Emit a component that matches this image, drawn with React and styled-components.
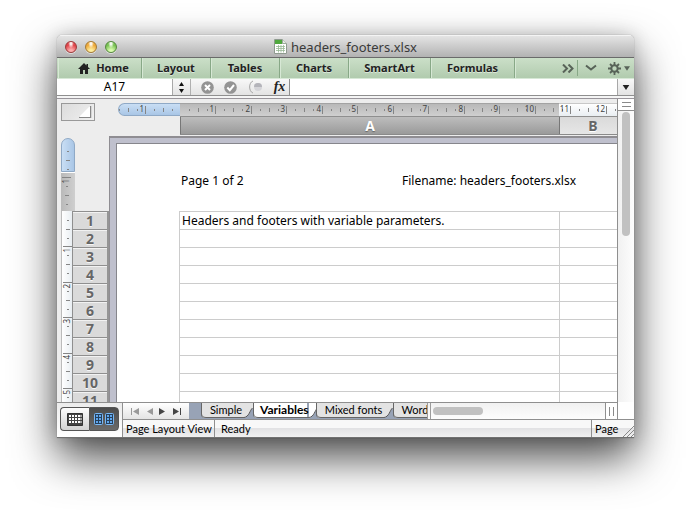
import React, { useState } from "react";
import styled, { createGlobalStyle } from "styled-components";

const uiFont = `"Noto Sans", "Open Sans", sans-serif`;
const statusFont = `Lato, "Noto Sans", sans-serif`;
const line = "#8f8f8f";
const rulerStep = 35.45;

const GlobalStyle = createGlobalStyle`
  *, *::before, *::after { box-sizing: border-box; }
  body { margin: 0; background: #fff; font-family: ${uiFont}; }
  button, input { margin: 0; padding: 0; border: 0; background: none; font: inherit; color: inherit; }
  svg { display: block; flex: none; }
`;

const Desktop = styled.main`
  display: flex;
  height: 100vh;
  min-height: 320px;
  padding: 35px 56px 78px 57px;
  overflow: hidden;
`;

const Window = styled.section`
  display: flex;
  flex: 1;
  flex-direction: column;
  min-width: 0;
  overflow: hidden;
  border-radius: 5px 5px 0 0;
  background: #ededed;
  box-shadow: 0 0 1px rgba(0, 0, 0, 0.5), 0 20px 44px rgba(0, 0, 0, 0.7), 0 0 18px rgba(0, 0, 0, 0.16);
`;

const TitleBar = styled.header`
  display: flex;
  flex: none;
  align-items: center;
  height: 23px;
  padding: 0 8px;
  border-top: 1px solid #f4f4f4;
  border-bottom: 1px solid #6a6a6a;
  background: linear-gradient(#e4e4e4, #b2b2b2);
`;

const Lights = styled.div`
  display: flex;
  flex: 1;
  gap: 8px;
`;

const Light = styled.button`
  width: 12px;
  height: 12px;
  border: 1px solid ${(p) => p.$rim};
  border-radius: 50%;
  background:
    radial-gradient(ellipse at 50% 12%, rgba(255, 255, 255, 0.9) 0 12%, transparent 40%),
    radial-gradient(circle at 50% 95%, ${(p) => p.$glow} 0 15%, ${(p) => p.$fill} 65%);
  box-shadow: 0 1px 0 rgba(255, 255, 255, 0.5);
`;

const Title = styled.h1`
  display: flex;
  align-items: center;
  gap: 4px;
  margin: 0;
  color: #3a3a3a;
  font-size: 13px;
  font-weight: 400;
  line-height: 20px;
`;

const TitleSpacer = styled.div`
  flex: 1;
`;

const Ribbon = styled.nav`
  display: flex;
  flex: none;
  height: 21px;
  padding-left: 1px;
  border-bottom: 1px solid #d7e8d6;
  background: linear-gradient(#cbdfc8, #b1cbae);
`;

const RibbonTab = styled.button`
  display: flex;
  flex: none;
  align-items: center;
  justify-content: center;
  gap: 6px;
  width: ${(p) => p.$width}px;
  padding-left: ${(p) => (p.$home ? "8px" : "0")};
  border-right: 1px solid #88a887;
  box-shadow: inset 1px 0 0 #d7e8d5;
  color: #222;
  font-size: 11px;
  font-weight: 700;
  line-height: 18px;
  text-shadow: 0 1px 0 rgba(255, 255, 255, 0.5);
`;

const RibbonTools = styled.div`
  display: flex;
  flex: 1;
  align-items: center;
  justify-content: flex-end;
  box-shadow: inset 1px 0 0 #d7e8d5;
`;

const RibbonTool = styled.button`
  display: flex;
  align-items: center;
  justify-content: center;
  gap: 3px;
  width: ${(p) => p.$width}px;
  height: 16px;
  border-left: 1px solid ${(p) => (p.$divided ? "#88a887" : "transparent")};
`;

const FormulaBar = styled.div`
  display: flex;
  flex: none;
  height: 17px;
  border-bottom: 1px solid ${line};
  background: linear-gradient(#f8f8f8, #e3e3e3);
`;

const NameBox = styled.input`
  width: 115px;
  background: #fff;
  color: #000;
  font-size: 12px;
  line-height: 16px;
  text-align: center;
`;

const BarButton = styled.button`
  display: flex;
  flex: none;
  align-items: center;
  justify-content: center;
  width: ${(p) => p.$width}px;
  border-left: 1px solid ${(p) => (p.$divided ? "#a8a8a8" : "transparent")};
`;

const BarTools = styled.div`
  display: flex;
  flex: none;
  padding-left: 4px;
  border-left: 1px solid #b0b0b0;
`;

const FxButton = styled(BarButton)`
  color: #222;
  font: italic 700 14px/14px "Liberation Serif", serif;
`;

const FormulaInput = styled.input`
  flex: 1;
  min-width: 0;
  border-left: 1px solid ${line};
  background: #fff;
  font-size: 12px;
`;

const Divider = styled.div`
  flex: none;
  height: 3px;
  border-bottom: 1px solid #99959b;
  background: #f5f5f5;
`;

const Workspace = styled.div`
  display: flex;
  flex: 1;
  min-height: 0;
`;

const SheetView = styled.div`
  display: flex;
  flex: 1;
  flex-direction: column;
  min-width: 0;
  overflow: hidden;
  background: #ededed;
`;

const TopHeaders = styled.div`
  display: flex;
  flex: none;
  height: 37px;
  padding: 4px 0 0 4px;
`;

const SelectAll = styled.button`
  display: flex;
  flex: none;
  align-items: flex-end;
  justify-content: flex-end;
  width: 34px;
  height: 18px;
  margin-right: 23px;
  padding: 0 2px 2px 0;
  border: 1px solid #999;
  background: linear-gradient(135deg, #dcdcdc, #f0f0f0);
`;

const ColumnArea = styled.div`
  display: flex;
  flex: 1;
  flex-direction: column;
  min-width: 0;
  overflow: hidden;
`;

const HorizontalRuler = styled.div`
  display: flex;
  flex: none;
  height: 13px;
`;

const RulerMargin = styled.div`
  flex: none;
  width: 62px;
  overflow: hidden;
  border: 1px solid #8fa9c6;
  border-right: 0;
  border-radius: 7px 0 0 7px;
  background: linear-gradient(#c9def4, #a9c6e6);
`;

const RulerPart = styled.div`
  flex: ${(p) => (p.$width ? `0 0 ${p.$width}px` : "1")};
  overflow: hidden;
  border-top: 1px solid ${(p) => (p.$width ? "#a3a3a3" : "#c8c8c8")};
  background: ${(p) => (p.$width ? "linear-gradient(#b9b9b9, #cfcfcf)" : "linear-gradient(#fff, #e9eef2)")};
`;

const ColumnHeads = styled.div`
  display: flex;
  flex: none;
  height: 19px;
  margin-left: 62px;
  border-top: 1px solid ${line};
  border-bottom: 1px solid #8a8a8a;
`;

const ColumnHead = styled.button`
  flex: none;
  width: ${(p) => p.$width}px;
  border-left: 1px solid #777;
  background: ${(p) => (p.$selected ? "linear-gradient(#bdbdbd, #9a9a9a)" : "linear-gradient(#dadada, #e6e6e6)")};
  color: ${(p) => (p.$selected ? "#fff" : "#666")};
  font-size: 14px;
  font-weight: 700;
  line-height: 15px;
  text-shadow: ${(p) => (p.$selected ? "0 1px 1px #666" : "0 1px 0 #fff")};
`;

const Lower = styled.div`
  display: flex;
  flex: 1;
  min-height: 0;
  padding-left: 4px;
  overflow: hidden;
`;

const Side = styled.div`
  display: flex;
  flex: none;
  flex-direction: column;
  width: 48px;
  padding-top: 2px;
`;

const SideMargin = styled.div`
  flex: none;
  width: 14px;
  height: 34px;
  overflow: hidden;
  border: 1px solid #8fa9c6;
  border-radius: 7px 7px 0 0;
  background: linear-gradient(90deg, #c9def4, #a9c6e6);
`;

const SideHeader = styled.div`
  flex: none;
  width: 14px;
  height: 39px;
  overflow: hidden;
  border-top: 1px solid #fff;
  background: linear-gradient(90deg, #b9b9b9, #cfcfcf);
`;

const SideRows = styled.div`
  display: flex;
`;

const SideScale = styled.div`
  width: 11px;
  overflow: hidden;
  border-left: 1px solid #bbb;
  background: linear-gradient(90deg, #fff, #e9eef2);
`;

const RowHeads = styled.div`
  flex: 1;
  border-top: 1px solid ${line};
  border-right: 2px solid #959595;
  border-left: 1px solid ${line};
`;

const RowHead = styled.button`
  display: block;
  width: 100%;
  height: 18px;
  border-bottom: 1px solid ${line};
  background: #dadada;
  box-shadow: inset 0 1px 0 #f2f2f2;
  color: #666;
  font-size: 14px;
  font-weight: 700;
  line-height: 15px;
  text-shadow: 0 1px 0 #f6f6f6;
`;

const Canvas = styled.div`
  flex: 1;
  min-width: 0;
  overflow: hidden;
  padding: 5px 0 0 6px;
  border-top: 2px solid #8f8d92;
  border-left: 1px solid #8f8d92;
  background: #bfc0cd;
`;

const Paper = styled.article`
  width: 744px;
  min-height: 100%;
  padding: 27px 63px 0 64px;
  border-top: 1px solid #86868c;
  border-left: 1px solid #86868c;
  background: #fff;
  color: #000;
  font-size: 12px;
`;

const PageHeader = styled.header`
  display: grid;
  grid-template-columns: 1fr auto 1fr;
  height: 40px;
  line-height: 20px;
`;

const Grid = styled.table`
  width: 616px;
  margin-left: -2px;
  border-collapse: collapse;
  table-layout: fixed;
`;

const Column = styled.col`
  width: ${(p) => p.$width}px;
`;

const Cell = styled.td`
  height: 18px;
  padding: 0 2px;
  border: 1px solid #ccc;
  line-height: 17px;
  white-space: nowrap;
`;

const VerticalBar = styled.div`
  flex: none;
  width: 17px;
  border-left: 1px solid ${line};
  background: linear-gradient(90deg, #f1f1f1, #fdfdfd);
`;

const SplitBox = styled.button`
  display: flex;
  flex: none;
  flex-direction: ${(p) => (p.$vertical ? "row" : "column")};
  align-items: center;
  justify-content: center;
  gap: 3px;
  width: ${(p) => (p.$vertical ? "12px" : "100%")};
  height: ${(p) => (p.$vertical ? "auto" : "12px")};
  border-bottom: ${(p) => (p.$vertical ? "0" : `1px solid ${line}`)};
  border-left: ${(p) => (p.$vertical ? `1px solid ${line}` : "0")};
  background: #fff;
`;

const SplitLine = styled.span`
  width: ${(p) => (p.$vertical ? "1px" : "9px")};
  height: ${(p) => (p.$vertical ? "9px" : "1px")};
  background: #8a8a8a;
`;

const VerticalThumb = styled.div`
  width: 8px;
  height: 41%;
  margin: 1px auto 0;
  border-radius: 4px;
  background: #c1c1c1;
`;

const Footer = styled.footer`
  display: flex;
  flex: none;
  height: 36px;
  border-bottom: 1px solid #707070;
  background: #fff;
`;

const ViewPanel = styled.div`
  display: flex;
  flex: none;
  width: 66px;
  padding: 4px 3px 6px 3px;
  border-top: 1px solid ${line};
  border-right: 1px solid ${line};
  background: linear-gradient(#ececec, #fff);
`;

const ViewButton = styled.button`
  display: flex;
  flex: 1;
  align-items: center;
  justify-content: center;
  gap: 2px;
  border: 1px solid #555;
  border-radius: ${(p) => (p.$active ? "0 4px 4px 0" : "4px 0 0 4px")};
  border-right-width: ${(p) => (p.$active ? "1px" : "0")};
  background: ${(p) => (p.$active ? "linear-gradient(#4c4c4c, #6a6a6a)" : "linear-gradient(#fdfdfd, #d2d2d2)")};
`;

const FooterMain = styled.div`
  display: flex;
  flex: 1;
  flex-direction: column;
  min-width: 0;
`;

const TabLine = styled.div`
  display: flex;
  height: 17px;
  padding-right: 16px;
`;

const TabLineInner = styled.div`
  display: flex;
  flex: 1;
  min-width: 0;
  border-top: 1px solid ${line};
  border-right: 1px solid ${line};
  background: #f2f2f2;
`;

const Navigator = styled.div`
  display: flex;
  flex: none;
  align-items: center;
  width: 66px;
  padding: 0 6px;
  background: linear-gradient(#fff, #e4e4e4);
`;

const NavButton = styled.button`
  display: flex;
  flex: 1;
  justify-content: center;
`;

const SheetTabs = styled.div`
  display: flex;
  flex: none;
  width: 238px;
  padding: 0 0 1px 12px;
  overflow: hidden;
  background: #98a3b6;
`;

const SheetTab = styled.button`
  display: flex;
  flex: none;
  width: ${(p) => p.$width}px;
  border-left: 1px solid #666;
  border-radius: 0 0 0 4px;
  background: linear-gradient(90deg, ${(p) => (p.$active ? "#fff" : "#e3e3e3")} calc(100% - 9px), transparent 0);
  color: #000;
  font-family: ${statusFont};
  font-size: ${(p) => (p.$active ? "12px" : "11px")};
  font-weight: ${(p) => (p.$active ? 700 : 400)};
  line-height: 13px;
`;

const TabText = styled.span`
  flex: 1;
  height: 100%;
  padding-left: 6px;
  border-bottom: 1px solid #666;
  border-radius: 0 0 0 4px;
  text-align: center;
  white-space: nowrap;
`;

const HorizontalTrack = styled.div`
  display: flex;
  flex: 1;
  align-items: center;
  padding-left: 2px;
  border-left: 4px double #9c9c9c;
  background: linear-gradient(#f1f1f1, #fdfdfd);
`;

const HorizontalThumb = styled.div`
  width: 29%;
  height: 8px;
  border-radius: 4px;
  background: #c1c1c1;
`;

const StatusBar = styled.div`
  display: flex;
  flex: 1;
  border-top: 1px solid ${line};
  background: linear-gradient(#f8f8f8 0 45%, #e2e2e4 50%, #f0f0f0);
  color: #000;
  font-family: ${statusFont};
  font-size: 11px;
  line-height: 17px;
  white-space: nowrap;
`;

const StatusItem = styled.div`
  flex: ${(p) => (p.$width ? `0 0 ${p.$width}px` : "1")};
  min-width: 0;
  padding-left: ${(p) => p.$inset}px;
  border-right: 1px solid ${line};
  overflow: hidden;
`;

const StatusEnd = styled.div`
  display: flex;
  flex: none;
  align-items: flex-end;
  justify-content: space-between;
  width: 42px;
  padding-left: 3px;
`;

const ScaleMarks = styled.g`
  text {
    fill: #444;
    stroke: none;
    font: 8px ${uiFont};
  }
`;

/* Quarter-unit ticks with a numbered line per unit; `start` shifts the origin before the visible part. */
function Scale({ from = 1, count = 10, start = 0, vertical = false }) {
  const marks = [];
  for (let i = 0; i <= count; i += 1) {
    const base = i * rulerStep - start;
    const at = Math.round(base + rulerStep);
    [9, 18, 27].forEach((step, k) => {
      const p = Math.round(base + step);
      const half = k === 1 ? 2 : 1;
      marks.push(
        <path
          key={`${i}-${k}`}
          d={vertical ? `M${6 - half} ${p + 0.5}h${half * 2}` : `M${p + 0.5} ${6 - half}v${half * 2}`}
        />
      );
    });
    if (i < count) {
      marks.push(
        vertical ? (
          <g key={`${i}-n`}>
            <path d={`M1 ${at + 0.5}h9`} />
            <text transform={`translate(8 ${at + 2}) rotate(-90)`} textAnchor="end">{from + i}</text>
          </g>
        ) : (
          <g key={`${i}-n`}>
            <path d={`M${at + 0.5} 2v8`} />
            <text x={at - 1} y="8" textAnchor="end">{from + i}</text>
          </g>
        )
      );
    }
  }
  const length = (count + 1) * 36;
  return (
    <svg
      width={vertical ? 12 : length}
      height={vertical ? length : 12}
      stroke="#858585"
      fill="none"
      aria-hidden="true"
    >
      <ScaleMarks>{marks}</ScaleMarks>
    </svg>
  );
}

const HomeIcon = () => (
  <svg width="12" height="11" viewBox="0 0 12 11" fill="#222">
    <path d="M6 0 0 6h2v5h3V7h2v4h3V6h2L10 4V1H8.500v1.500z" />
  </svg>
);

const FileIcon = () => (
  <svg width="13" height="15" viewBox="0 0 13 15">
    <path d="M.5.5h8l4 4v10H.5z" fill="#fff" stroke="#8e9a8e" />
    <path d="M1 1h7.500v4H1z" fill="#4fa83d" />
    <path d="M8.500.5v4h4" fill="#e7efe5" stroke="#9caa9c" />
    <path d="M2 7.500h9M2 9.500h9M2 11.500h9M4.500 6v7.500M7 6v7.500M9.500 6v7.500" stroke="#98b894" strokeWidth=".8" />
  </svg>
);

const MoreIcon = () => (
  <svg width="12" height="9" viewBox="0 0 12 9" fill="none" stroke="#586358" strokeWidth="2">
    <path d="M1 .5l4 4-4 4M6.500.5l4 4-4 4" />
  </svg>
);

const ChevronIcon = () => (
  <svg width="12" height="8" viewBox="0 0 12 8" fill="none" stroke="#586358" strokeWidth="2">
    <path d="M1 1.500l5 4 5-4" />
  </svg>
);

const GearIcon = () => (
  <svg width="13" height="13" viewBox="0 0 13 13" fill="none" stroke="#586358">
    <circle cx="6.500" cy="6.500" r="3.200" strokeWidth="2" />
    <path d="M6.500 0v3M6.500 10v3M0 6.500h3M10 6.500h3M2 2l2 2M9 9l2 2M11 2 9 4M4 9l-2 2" strokeWidth="1.800" />
  </svg>
);

const DownIcon = ({ color, size }) => (
  <svg width={size} height="5" viewBox="0 0 8 6" fill={color}>
    <path d="M0 0h8L4 6z" />
  </svg>
);

const StepperIcon = () => (
  <svg width="5" height="11" viewBox="0 0 5 11" fill="#111">
    <path d="M0 4 2.500 0 5 4zM0 7h5L2.500 11z" />
  </svg>
);

const RoundIcon = ({ kind }) => (
  <svg width="13" height="13" viewBox="0 0 13 13" fill="none">
    <circle cx="6.500" cy="6.500" r="6.300" fill="#949494" />
    <path d={kind === "cancel" ? "M4 4l5 5M9 4 4 9" : "M3.300 6.500l2.500 2.700L10 4"} stroke="#fff" strokeWidth="2" />
  </svg>
);

const BuilderIcon = () => (
  <svg width="16" height="14" viewBox="0 0 16 14" fill="none">
    <path d="M5 1C.5 2.500.5 11.500 5 13" stroke="#a6a6a6" />
    <circle cx="10" cy="7" r="4" fill="#d4d4d8" />
    <path d="M6 7a4 4 0 0 1 8 0z" fill="#b4b4ba" />
  </svg>
);

const CornerIcon = () => (
  <svg width="13" height="12" viewBox="0 0 13 12">
    <path d="M11.500 0v11.500H0" fill="none" stroke="#888" strokeWidth="1.500" />
    <path d="M11 0v11H0z" fill="#fff" />
  </svg>
);

const SheetIcon = () => (
  <svg width="16" height="13" viewBox="0 0 16 13" fill="none" stroke="#333">
    <path d="M.5.5h15v12H.5z" fill="#444" />
    <path d="M3 2v9M6 2v9M9 2v9M12 2v9" stroke="#fff" strokeWidth="2" strokeDasharray="2 1" />
    <path d="M14 2v9" stroke="#fff" strokeDasharray="2 1" />
  </svg>
);

const PageIcon = () => (
  <svg width="9" height="12" viewBox="0 0 9 12" fill="none" stroke="#78b8f6">
    <rect x=".5" y=".5" width="8" height="11" rx="1" fill="#26405c" />
    <path d="M3 2v8M6 2v8" stroke="#5ea6ee" strokeWidth="2" strokeDasharray="2 1" />
  </svg>
);

const NavIcon = ({ back, end }) => (
  <svg width="9" height="7" viewBox="0 0 9 7" fill={back ? "#999" : "#444"}>
    {back ? <path d="M8 0v7L2 3.500z" /> : <path d="M1 0v7l6-3.500z" />}
    {end && <path d={back ? "M0 0h1v7H0z" : "M8 0h1v7H8z"} />}
  </svg>
);

const TabCorner = ({ active }) => (
  <svg width="9" height="15" viewBox="0 0 9 15">
    <path d="M0 0h9v5C6 7 5 14 0 15z" fill={active ? "#fff" : "#e3e3e3"} />
    <path d="M8.500 5C6 7 5 14 0 14.500" fill="none" stroke="#555" />
  </svg>
);

const GripIcon = () => (
  <svg width="12" height="12" viewBox="0 0 12 12" stroke="#888" fill="none">
    <path d="M1 12 12 1M5 12l7-7M9 12l3-3" />
  </svg>
);

const lights = [
  ["Close", "#9c3a3a", "#e0454a", "#ffb0b0"],
  ["Minimize", "#a47a34", "#eda93a", "#fff0a0"],
  ["Zoom", "#55883e", "#79c254", "#dcffb0"],
];

const ribbonTabs = [
  ["Home", 84],
  ["Layout", 69],
  ["Tables", 69],
  ["Charts", 69],
  ["SmartArt", 82],
  ["Formulas", 84],
];

const sheetTabs = [
  ["Simple", 52],
  ["Variables", 63],
  ["Mixed fonts", 77],
  ["Word", 46],
];

const rows = Array.from({ length: 24 }, (_, i) => i + 1);

export default function App() {
  const [activeTab, setActiveTab] = useState("Variables");
  return (
    <>
      <GlobalStyle />
      <Desktop>
        <Window>
          <TitleBar>
            <Lights>
              {lights.map(([label, rim, fill, glow]) => (
                <Light key={label} aria-label={label} $rim={rim} $fill={fill} $glow={glow} />
              ))}
            </Lights>
            <Title><FileIcon />headers_footers.xlsx</Title>
            <TitleSpacer />
          </TitleBar>
          <Ribbon>
            {ribbonTabs.map(([label, width]) => (
              <RibbonTab key={label} $width={width} $home={label === "Home"}>
                {label === "Home" && <HomeIcon />}
                {label}
              </RibbonTab>
            ))}
            <RibbonTools>
              <RibbonTool $width={19} aria-label="More tabs"><MoreIcon /></RibbonTool>
              <RibbonTool $width={26} $divided aria-label="Collapse ribbon"><ChevronIcon /></RibbonTool>
              <RibbonTool $width={31} aria-label="Ribbon settings">
                <GearIcon />
                <DownIcon color="#586358" size={6} />
              </RibbonTool>
            </RibbonTools>
          </Ribbon>
          <FormulaBar>
            <NameBox aria-label="Name box" defaultValue="A17" />
            <BarButton $width={18} $divided aria-label="Choose name"><StepperIcon /></BarButton>
            <BarTools>
              <BarButton $width={23} aria-label="Cancel"><RoundIcon kind="cancel" /></BarButton>
              <BarButton $width={23} aria-label="Enter"><RoundIcon kind="enter" /></BarButton>
              <BarButton $width={28} aria-label="Formula builder"><BuilderIcon /></BarButton>
              <FxButton $width={20}>fx</FxButton>
            </BarTools>
            <FormulaInput aria-label="Formula" />
            <BarButton $width={17} $divided aria-label="Expand formula bar">
              <DownIcon color="#222" size={8} />
            </BarButton>
          </FormulaBar>
          <Divider />
          <Workspace>
            <SheetView>
              <TopHeaders>
                <SelectAll aria-label="Select all"><CornerIcon /></SelectAll>
                <ColumnArea>
                  <HorizontalRuler>
                    <RulerMargin><Scale count={1} start={9} /></RulerMargin>
                    <RulerPart $width={379}><Scale count={10} /></RulerPart>
                    <RulerPart><Scale from={11} count={6} start={24} /></RulerPart>
                  </HorizontalRuler>
                  <ColumnHeads>
                    <ColumnHead $width={379} $selected>A</ColumnHead>
                    <ColumnHead $width={67}>B</ColumnHead>
                    <ColumnHead $width={67}>C</ColumnHead>
                    <ColumnHead $width={67}>D</ColumnHead>
                  </ColumnHeads>
                </ColumnArea>
              </TopHeaders>
              <Lower>
                <Side>
                  <SideMargin><Scale vertical count={0} start={-3} /></SideMargin>
                  <SideHeader><Scale vertical count={1} start={31} /></SideHeader>
                  <SideRows>
                    <SideScale><Scale vertical count={12} /></SideScale>
                    <RowHeads>
                      {rows.map((n) => <RowHead key={n}>{n}</RowHead>)}
                    </RowHeads>
                  </SideRows>
                </Side>
                <Canvas>
                  <Paper>
                    <PageHeader>
                      <span>Page 1 of 2</span>
                      <span>Filename: headers_footers.xlsx</span>
                    </PageHeader>
                    <Grid>
                      <colgroup>
                        <Column $width={380} />
                        <Column $width={67} />
                        <Column $width={67} />
                        <Column />
                      </colgroup>
                      <tbody>
                        {rows.map((n) => (
                          <tr key={n}>
                            <Cell>{n === 1 ? "Headers and footers with variable parameters." : ""}</Cell>
                            <Cell />
                            <Cell />
                            <Cell />
                          </tr>
                        ))}
                      </tbody>
                    </Grid>
                  </Paper>
                </Canvas>
              </Lower>
            </SheetView>
            <VerticalBar>
              <SplitBox aria-label="Split rows"><SplitLine /><SplitLine /></SplitBox>
              <VerticalThumb />
            </VerticalBar>
          </Workspace>
          <Footer>
            <ViewPanel>
              <ViewButton aria-label="Normal view"><SheetIcon /></ViewButton>
              <ViewButton $active aria-label="Page layout view"><PageIcon /><PageIcon /></ViewButton>
            </ViewPanel>
            <FooterMain>
              <TabLine>
                <TabLineInner>
                  <Navigator>
                    <NavButton aria-label="First sheet"><NavIcon back end /></NavButton>
                    <NavButton aria-label="Previous sheet"><NavIcon back /></NavButton>
                    <NavButton aria-label="Next sheet"><NavIcon /></NavButton>
                    <NavButton aria-label="Last sheet"><NavIcon end /></NavButton>
                  </Navigator>
                  <SheetTabs>
                    {sheetTabs.map(([label, width]) => (
                      <SheetTab
                        key={label}
                        $width={width}
                        $active={label === activeTab}
                        onClick={() => setActiveTab(label)}
                      >
                        <TabText>{label}</TabText>
                        <TabCorner active={label === activeTab} />
                      </SheetTab>
                    ))}
                  </SheetTabs>
                  <HorizontalTrack><HorizontalThumb /></HorizontalTrack>
                  <SplitBox $vertical aria-label="Split columns">
                    <SplitLine $vertical /><SplitLine $vertical />
                  </SplitBox>
                </TabLineInner>
              </TabLine>
              <StatusBar>
                <StatusItem $width={92} $inset={3}>Page Layout View</StatusItem>
                <StatusItem $inset={6}>Ready</StatusItem>
                <StatusEnd>Page<GripIcon /></StatusEnd>
              </StatusBar>
            </FooterMain>
          </Footer>
        </Window>
      </Desktop>
    </>
  );
}
